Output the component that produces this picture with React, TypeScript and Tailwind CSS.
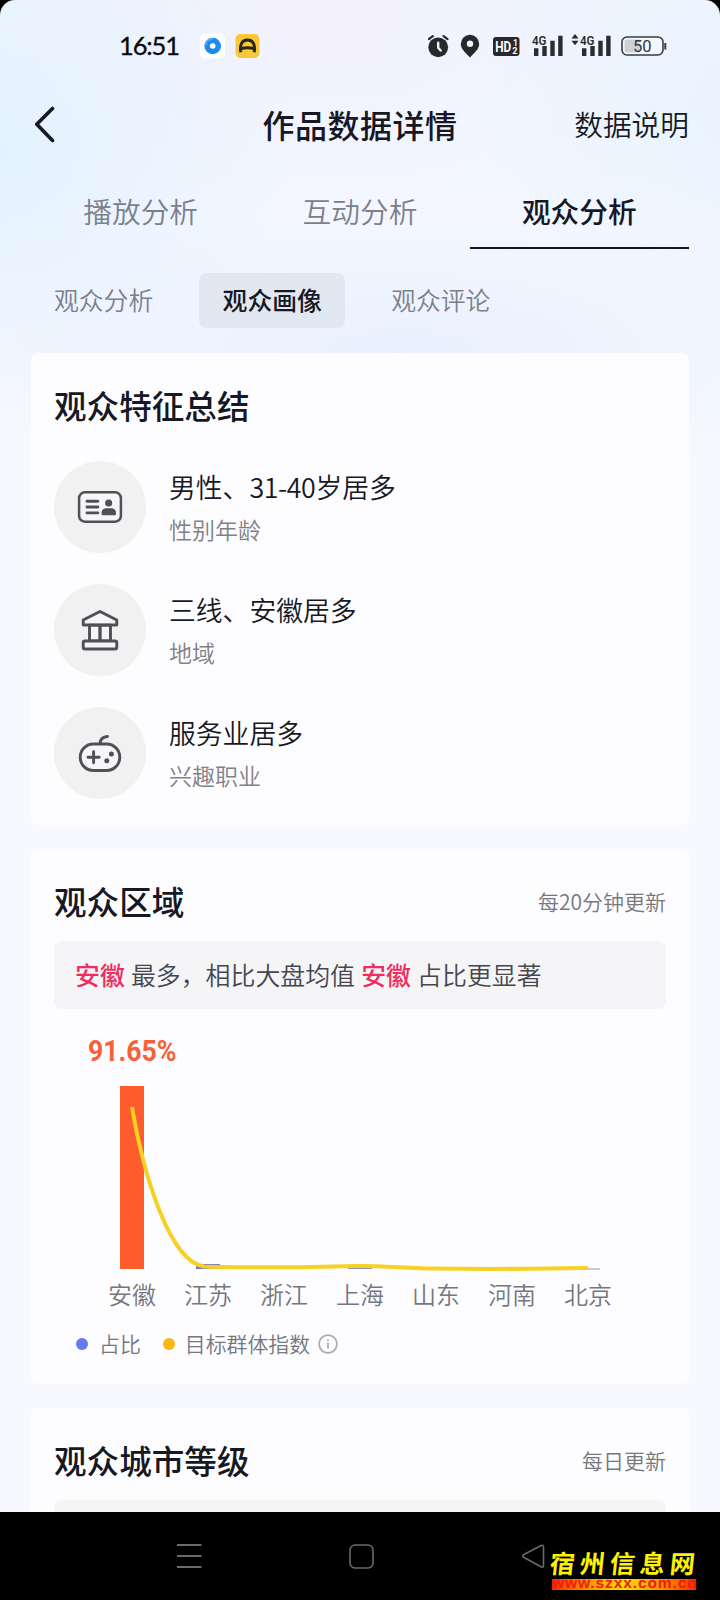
import type { ReactNode } from "react";

/** 特征总结 */
const TRAITS = [
  { icon: <IdCardIcon />, value: ["男性、", "31-40", "岁居多"], label: "性别年龄" },
  { icon: <LandmarkIcon />, value: ["三线、安徽居多"], label: "地域" },
  { icon: <GamepadIcon />, value: ["服务业居多"], label: "兴趣职业" },
];

const REGIONS = ["安徽", "江苏", "浙江", "上海", "山东", "河南", "北京"];

function IdCardIcon() {
  return (
    <svg width="46" height="34" viewBox="0 0 44 32" fill="none" stroke="#4f5058" strokeWidth="2.4">
      <rect x="2" y="2" width="40" height="28" rx="5.5" fill="#f6f6f9" />
      <path d="M9.5 10.5h10.5M9.5 16h10.5M9.5 21.7h10.5" strokeLinecap="round" strokeWidth="2.7" />
      <circle cx="30.3" cy="12.2" r="3.4" fill="#4f5058" stroke="none" />
      <path d="M23.5 22.8v-1.3c0-3 2.5-4.4 4.6-4.4h4.6c2.1 0 4.6 1.4 4.6 4.4v1.3c0 .7-.4 1.1-1.1 1.1H24.600c-.7 0-1.1-.4-1.1-1.1Z" fill="#4f5058" stroke="none" />
    </svg>
  );
}

function LandmarkIcon() {
  return (
    <svg width="42" height="44" viewBox="0 0 40 42" fill="none" stroke="#4f5058" strokeWidth="2.8" strokeLinejoin="round">
      <path d="M4 16.300v-4.800L20 3.400l16 8.100v4.800Z" fill="#f6f6f9" />
      <path d="M10 16.500h20V31.500H10Z" fill="#f6f6f9" />
      <path d="M20 16.500V31.500" strokeWidth="3.2" />
      <rect x="4" y="31.5" width="32" height="7.7" rx="1.5" fill="#f6f6f9" />
    </svg>
  );
}

function GamepadIcon() {
  return (
    <svg width="44" height="40" viewBox="0 0 44 40" fill="none" stroke="#4f5058" strokeWidth="2.9" strokeLinecap="round">
      <rect x="2.2" y="11" width="39.6" height="26.5" rx="13.2" fill="#f6f6f9" />
      <path d="M22 10.500c.2-4 2.600-6.500 7.500-7" />
      <path d="M10 24.200h11.200M15.600 18.600v11.200" />
      <circle cx="33.4" cy="21" r="2.5" fill="#4f5058" stroke="none" />
      <circle cx="28.8" cy="27.7" r="2.5" fill="#4f5058" stroke="none" />
    </svg>
  );
}

function Signal() {
  return (
    <svg width="31" height="30" viewBox="0 -4 31 30" fill="#2a2c2e">
      <path d="M2 13.300h4.400V21H2zM10.300 11h4.400v10h-4.400zM18.300 5.700h4.400V21h-4.400zM26.200.7h4.400V21h-4.400z" />
      <text x="0" y="9.800" fontSize="13.500" fontWeight="600" textLength="14.500" lengthAdjust="spacingAndGlyphs" className="font-['Roboto',sans-serif]">
        4G
      </text>
    </svg>
  );
}

function StatusBar() {
  return (
    <div className="flex h-[92px] items-center pl-[119px] pr-[53px]">
      <svg width="66" height="34" viewBox="0 -2 66 34" className="font-['Lato',sans-serif]">
        <text x="0" y="24" fontSize="25.5" fill="#08090c" stroke="#08090c" strokeWidth="0.3" textLength="61" lengthAdjust="spacing">
          16:51
        </text>
      </svg>
      <svg width="62" height="26" viewBox="0 0 62 26" className="ml-[15px]">
        <rect x="0" y="0.5" width="25" height="25" rx="5" fill="#fff" />
        <circle cx="12.7" cy="13" r="8.3" fill="#1f8be8" />
        <path d="M5.500 12a7.300 7.300 0 0 1 7-6.300" fill="none" stroke="#4fb0f5" strokeWidth="2" />
        <circle cx="12.7" cy="13" r="2.8" fill="#fff" />
        <rect x="35.5" y="1" width="24" height="24" rx="5" fill="#f6c83a" />
        <path d="M40.800 19.300c-1.300-7.500 1-12.300 6.700-12.300s8 4.800 6.700 12.300M40.500 15.800c4.500-1.300 9.500-1.300 14 0" fill="none" stroke="#2b2718" strokeWidth="3" />
      </svg>
      <div className="ml-auto flex items-center">
        <svg width="22" height="24" viewBox="0 0 22 24" fill="#27292b">
          <circle cx="10.2" cy="13.3" r="9.9" />
          <path d="M.9 5.200 4.800 2.200M19.500 5.200 15.600 2.200" stroke="#27292b" strokeWidth="2.2" strokeLinecap="round" />
          <path d="M10.200 8.800v5l2.500 2.700" fill="none" stroke="#f1f4fe" strokeWidth="2.4" strokeLinecap="round" />
        </svg>
        <svg width="20" height="24" viewBox="0 0 20 24" className="ml-2.5" fill="#27292b">
          <path fillRule="evenodd" d="M10 .8a9.200 9.200 0 0 1 9.200 9.200c0 4.800-4.700 9-9.200 13.400C5.500 19 .8 14.800.8 10A9.200 9.200 0 0 1 10 .8Zm0 5.700a3.200 3.200 0 1 0 0 6.400 3.200 3.200 0 0 0 0-6.400Z" />
        </svg>
        <svg width="27" height="20" viewBox="0 0 27 20" className="ml-[13px] mt-px font-['Roboto',sans-serif] font-bold">
          <rect width="26.5" height="19" rx="3" fill="#27292b" />
          <g fill="#fff">
            <text x="2.3" y="15" fontSize="15.5" textLength="16" lengthAdjust="spacingAndGlyphs">HD</text>
            <text x="20" y="8.8" fontSize="8.5">1</text>
            <text x="19.300" y="17.2" fontSize="9">2</text>
          </g>
        </svg>
        <div className="ml-3"><Signal /></div>
        <svg width="8" height="12" viewBox="0 0 8 12" className="mb-3 ml-2" fill="#27292b">
          <path d="M4 0 7.500 4.500H.5ZM4 11.300 .5 6.800h7Z" />
        </svg>
        <div className="ml-px"><Signal /></div>
        <svg width="46" height="20" viewBox="0 0 46 20" className="ml-2.5">
          <rect x="1" y="1" width="41" height="18" rx="5" fill="#f3f7fe" stroke="#3a3c40" strokeWidth="1.6" />
          <path d="M6 3.500h12.500v13H6Q3.500 16.500 3.500 14V6Q3.500 3.500 6 3.500Z" fill="#cdd0d5" />
          <path d="M44.300 7v6.500" stroke="#3a3c40" strokeWidth="2" />
          <text x="12" y="15.800" fontSize="16.5" fill="#35373b" textLength="18.5" className="font-['Roboto',sans-serif]">50</text>
        </svg>
      </div>
    </div>
  );
}

function Card({ className, children }: { className: string; children: ReactNode }) {
  return <section className={`mx-[31px] rounded-lg bg-[#fdfdff] px-[23px] ${className}`}>{children}</section>;
}

function CardTitle({ children, extra }: { children: ReactNode; extra?: string }) {
  return (
    <div className="flex h-10 items-center justify-between">
      <h2 className="pb-[3px] text-[32.6px] font-medium leading-9 text-[#161823]">{children}</h2>
      {extra && <span className="pb-0.5 text-[21px] font-[350] leading-[38px] text-[#75767e]">{extra}</span>}
    </div>
  );
}

function RegionChart() {
  return (
    <div className="mt-[26px]">
      <svg width="612" height="236" viewBox="54 1035 612 236" className="block">
        <text x="88" y="1061" fontSize="29.5" fontWeight="700" fill="#f6603a" textLength="88.5" lengthAdjust="spacingAndGlyphs" className="font-['Roboto',sans-serif]">
          91.65%
        </text>
        <rect x="120" y="1086" width="24" height="183" fill="#ff5c2e" />
        <rect x="196" y="1264" width="24" height="5" fill="#7079c8" />
        <rect x="348" y="1266" width="24" height="3" fill="#8a8ec0" />
        <path d="M576 1269h24" stroke="#c9cad6" strokeWidth="2" />
        <path
          d="M132 1107C144 1177 170 1262 204 1266.500C230 1267.500 258 1267.300 284 1267.300C310 1267.300 334 1266 360 1266C386 1266 410 1268.300 436 1268.500C470 1269 560 1268.500 588 1268"
          fill="none"
          stroke="#f6d023"
          strokeWidth="4"
        />
      </svg>
      <div className="ml-10 flex">
        {REGIONS.map((name) => (
          <span key={name} className="w-[76px] text-center text-[24px] font-[350] leading-[46px] text-[#75767e]">
            {name}
          </span>
        ))}
      </div>
      <div className="ml-[22px] mt-[5px] flex h-11 items-center text-[20.9px] font-[350] text-[#75767e]">
        <i className="size-3 rounded-full bg-[#6878ee]" />
        <span className="ml-[11px]">占比</span>
        <i className="ml-[22px] size-3 rounded-full bg-[#fdb515]" />
        <span className="ml-2.5">目标群体指数</span>
        <svg width="20" height="20" viewBox="0 0 20 20" className="ml-2" fill="none" stroke="#a9aab0" strokeWidth="1.7">
          <circle cx="10" cy="10" r="8.9" />
          <path d="M10 8.500v6M10 5.500v1.600" />
        </svg>
      </div>
    </div>
  );
}

function NavBar() {
  return (
    <div className="relative flex h-[88px] shrink-0 bg-black">
      <svg width="720" height="88" viewBox="0 0 720 88" fill="none" stroke="#6a6a6a" strokeWidth="2">
        <path d="M177 33h24.500M177 44h24.500M177 55h24.500" />
        <rect x="350" y="33" width="23" height="23" rx="5" strokeWidth="1.6" />
        <path d="M541 33.500 524 42.500q-2.500 1.500 0 3L541 54.800q2.500 1 2.500-1.300V35q0-2.500-2.500-1.500Z" strokeWidth="1.6" />
      </svg>
      <div className="absolute left-[550px] top-[37px] w-[156px]">
        <p className="-skew-x-6 whitespace-nowrap text-[25px] font-bold leading-[27px] tracking-[5px] text-[#fff200]">宿州信息网</p>
        <p className="ml-0.5 mt-[3px] h-[11px] w-[144px] whitespace-nowrap bg-linear-to-r from-[#ff1a00] via-[#ffe000] to-[#ff1a00] text-[15.5px] font-bold leading-[8px] tracking-[0.9px] text-[#e8200c] font-['Liberation_Sans',sans-serif]">
          www.szxx.com.cn
        </p>
      </div>
    </div>
  );
}

export default function App() {
  return (
    <div className="h-[1600px] w-[720px] overflow-hidden bg-black font-['Noto_Sans_CJK_SC',sans-serif]">
      <div className="flex h-full flex-col">
        <main className="h-[1512px] overflow-hidden rounded-t-[15px] bg-[#f8f9ff] bg-[radial-gradient(ellipse_320px_260px_at_-20px_150px,#e2f2ff_0%,#e2f2ff00_100%),radial-gradient(ellipse_260px_200px_at_330px_0px,#f3f1fd_0%,#f3f1fd00_100%),radial-gradient(ellipse_260px_220px_at_740px_110px,#e9f4ff_0%,#e9f4ff00_100%),radial-gradient(ellipse_500px_140px_at_400px_350px,#e9f1fe_0%,#e9f1fe00_100%),linear-gradient(#eff4fe_0px,#f4f7ff_240px,#f8f9ff_480px)]">
          <StatusBar />

          <header className="grid h-[64px] grid-cols-3 items-center px-[31px]">
            <svg width="26" height="38" viewBox="0 0 26 38" fill="none" stroke="#161823" strokeWidth="3.6" strokeLinecap="round" strokeLinejoin="round">
              <path d="M21.500 3.500 5.800 19.300 21.500 35.500" />
            </svg>
            <h1 className="whitespace-nowrap pb-px text-center text-[32px] font-medium leading-none tracking-[0.5px] text-[#161823]">作品数据详情</h1>
            <span className="text-right text-[28.7px] font-[350] leading-none text-[#161823]">数据说明</span>
          </header>

          <nav className="mx-[31px] grid h-[93px] grid-cols-3 text-center text-[28.7px] font-[350] leading-[110px] text-[#7c8089]">
            <span>播放分析</span>
            <span>互动分析</span>
            <span className="h-[93px] border-b-2 border-[#161823] font-medium text-[#161823]">观众分析</span>
          </nav>

          <nav className="mt-6 flex h-[55px] pl-[54px] text-[24.8px] font-[350] leading-[53px] text-[#7c8089]">
            <span>观众分析</span>
            <span className="ml-[46px] w-[146px] rounded-lg bg-[#e2e8f2] text-center font-medium text-[#161823]">观众画像</span>
            <span className="ml-[46px]">观众评论</span>
          </nav>

          {/* 观众特征总结 */}
          <Card className="mt-[25px] h-[472px] pt-[33px]">
            <CardTitle>观众特征总结</CardTitle>
            <ul className="mt-[35px] space-y-[31px]">
              {TRAITS.map((t) => (
                <li key={t.label} className="flex h-[92px] items-center">
                  <div className="flex size-[92px] items-center justify-center rounded-full bg-[#f1f1f2]">{t.icon}</div>
                  <div className="ml-[23px] mt-px">
                    <p className="text-[26.8px] font-[350] leading-[42px] text-[#161823]">
                      {t.value[0]}
                      {t.value[1] && <span className="tracking-[-0.4px]">{t.value[1]}</span>}
                      {t.value[2]}
                    </p>
                    <p className="text-[23px] font-[350] leading-[42px] text-[#808188]">{t.label}</p>
                  </div>
                </li>
              ))}
            </ul>
          </Card>

          {/* 观众区域 */}
          <Card className="mt-6 h-[535px] pt-[33px]">
            <CardTitle extra="每20分钟更新">观众区域</CardTitle>
            <p className="mt-[19px] h-[68px] rounded-lg bg-[#f5f5f8] pl-[21px] text-[24.9px] font-[350] leading-[66px] text-[#45464e] [word-spacing:0.6px]">
              <b className="font-medium text-[#f02d5e]">安徽</b> 最多，相比大盘均值 <b className="font-medium text-[#f02d5e]">安徽</b> 占比更显著
            </p>
            <RegionChart />
          </Card>

          {/* 观众城市等级 */}
          <Card className="mt-6 h-[200px] pt-[33px]">
            <CardTitle extra="每日更新">观众城市等级</CardTitle>
            <div className="mt-[19px] h-[68px] rounded-lg bg-[#f5f5f6]" />
          </Card>
        </main>
        <NavBar />
      </div>
    </div>
  );
}
